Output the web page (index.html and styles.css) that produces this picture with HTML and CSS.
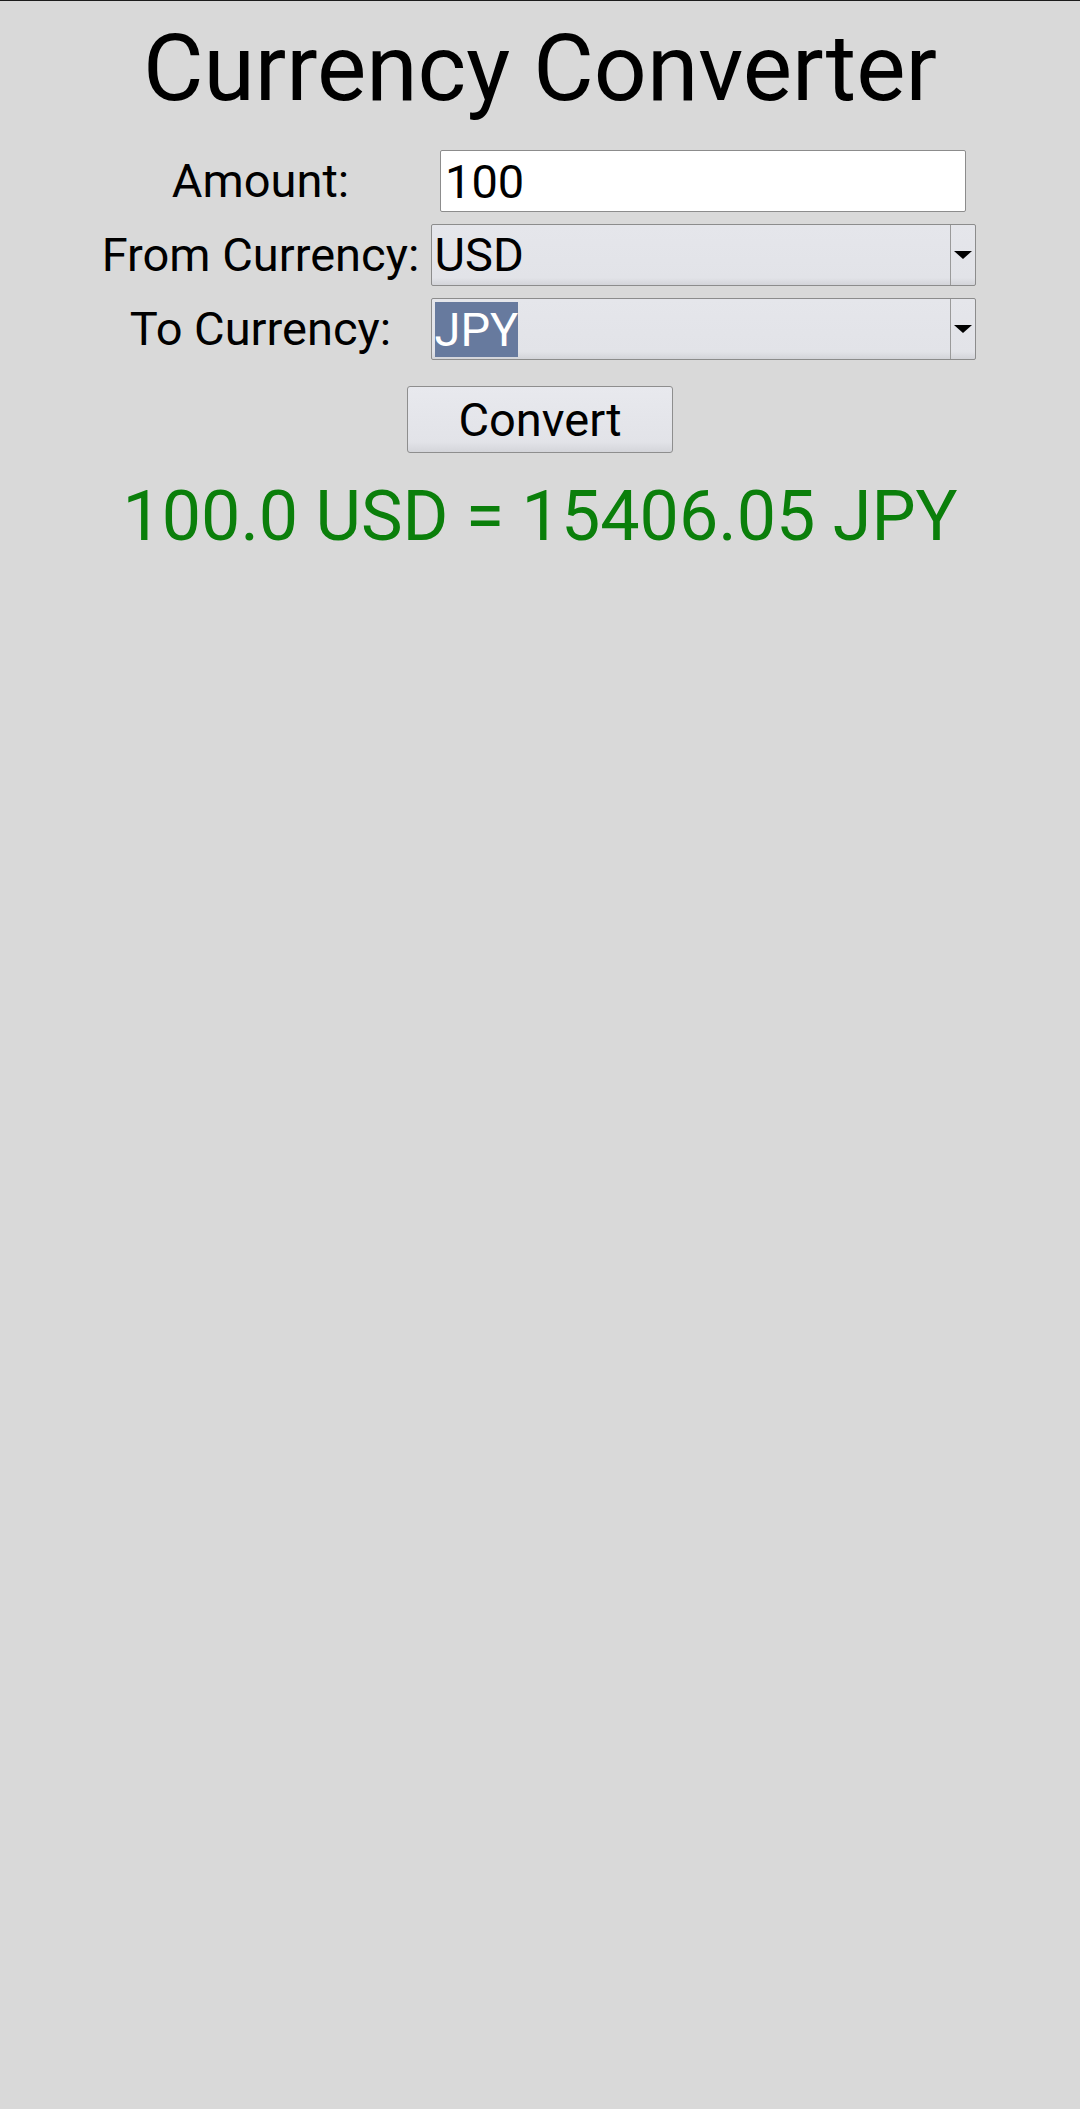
FILE: index.html
```html
<!DOCTYPE html>
<html lang="en">
<head>
<meta charset="utf-8">
<title>Currency Converter</title>
<link rel="stylesheet" href="styles.css">
</head>
<body>
<main class="app">
  <h1 class="title">Currency Converter</h1>
  <div class="form">
    <label class="label" for="amount">Amount:</label>
    <div class="cell">
      <input id="amount" class="entry" type="text" value="100">
    </div>
    <div class="label">From Currency:</div>
    <div class="cell">
      <div class="combo">
        <div class="combo-text">USD</div>
        <div class="combo-arrow"><span class="tri"></span></div>
      </div>
    </div>
    <div class="label">To Currency:</div>
    <div class="cell">
      <div class="combo">
        <div class="combo-text"><span class="sel">JPY</span></div>
        <div class="combo-arrow"><span class="tri"></span></div>
      </div>
    </div>
  </div>
  <div class="actions">
    <button class="btn" type="button">Convert</button>
  </div>
  <p class="result">100.0 USD = 15406.05 JPY</p>
</main>
</body>
</html>
```

FILE: styles.css
```css
html, body {
  margin: 0;
  padding: 0;
}

body {
  background: #d9d9d9;
  border-top: 1px solid #1c1c1c;
  min-height: 2108px;
  font-family: Roboto, "Liberation Sans", sans-serif;
  color: #000;
}

.app {
  display: flex;
  flex-direction: column;
  align-items: center;
  padding-top: 13px;
}

.title {
  margin: 0;
  font-size: 93px;
  font-weight: 400;
  line-height: 109px;
  text-align: center;
}

.form {
  margin-top: 27px;
  display: grid;
  grid-template-columns: 322px 555px;
  column-gap: 4px;
  row-gap: 12px;
  grid-auto-rows: 62px;
}

.label {
  display: flex;
  align-items: center;
  justify-content: center;
  font-size: 47px;
  line-height: 54px;
  white-space: nowrap;
  padding-bottom: 1px;
}

.cell {
  display: flex;
  justify-content: center;
  align-items: stretch;
}

.entry {
  box-sizing: border-box;
  width: 526px;
  height: 62px;
  margin: 0;
  padding: 0 4px 0 4px;
  border: 1px solid #8c8c8c;
  border-radius: 2px;
  background: #fff;
  font-family: Roboto, "Liberation Sans", sans-serif;
  font-size: 47px;
  color: #000;
  outline: none;
}

.combo {
  box-sizing: border-box;
  width: 545px;
  height: 62px;
  display: flex;
  border: 1px solid #8c8c8c;
  border-radius: 2px;
  background: linear-gradient(#e5e6eb 0%, #e2e3e8 88%, #d3d4d9 100%);
}

.combo-text {
  flex: 1;
  display: flex;
  align-items: center;
  padding-left: 3px;
  font-size: 47px;
  line-height: 54px;
}

.sel {
  background: #677a9e;
  color: #fff;
  line-height: 55px;
}

.combo-arrow {
  width: 24px;
  border-left: 1px solid #9a9a9a;
  display: flex;
  align-items: center;
  justify-content: center;
}

.tri {
  width: 0;
  height: 0;
  border-left: 9px solid transparent;
  border-right: 9px solid transparent;
  border-top: 8px solid #000;
  margin-left: 1px;
}

.actions {
  margin-top: 26px;
  display: flex;
  justify-content: center;
}

.btn {
  box-sizing: border-box;
  width: 266px;
  height: 67px;
  margin: 0;
  padding: 0;
  border: 1px solid #8e8e8e;
  border-radius: 3px;
  background: linear-gradient(#e8e9ee 0%, #e2e3e8 85%, #d4d5da 100%);
  font-family: Roboto, "Liberation Sans", sans-serif;
  font-size: 47px;
  line-height: 54px;
  color: #000;
}

.result {
  margin: 22px 0 0;
  font-size: 70px;
  line-height: 82px;
  color: #0b7f0b;
  text-align: center;
}
```
